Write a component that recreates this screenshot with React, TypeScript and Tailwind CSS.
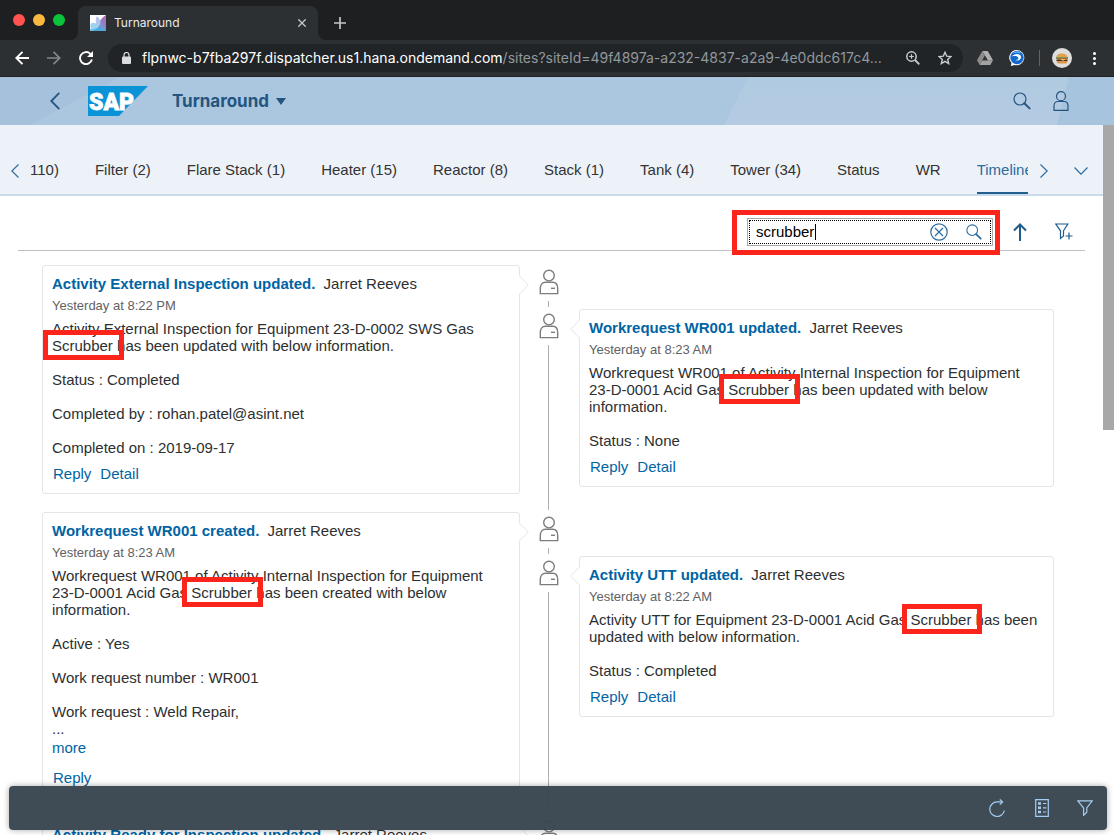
import { useState, type ReactNode } from 'react';

type Entry = {
  title: string;
  author: string;
  time: string;
  body: ReactNode;
  lines: string[];
  more?: boolean;
  actions: string[];
};

const tabs = ['110)', 'Filter (2)', 'Flare Stack (1)', 'Heater (15)', 'Reactor (8)', 'Stack (1)', 'Tank (4)', 'Tower (34)', 'Status', 'WR', 'Timeline'];

function Mark({ children }: { children: string }) {
  return (
    <span className="relative">
      {children}
      <span className="pointer-events-none absolute -top-[7px] -right-[11px] -bottom-[6px] -left-[9px] border-[5px] border-[#fc251c]" />
    </span>
  );
}

const rows: { left: Entry; right?: Entry }[] = [
  {
    left: {
      title: 'Activity External Inspection updated.',
      author: 'Jarret Reeves',
      time: 'Yesterday at 8:22 PM',
      body: <>Activity External Inspection for Equipment 23-D-0002 SWS Gas <Mark>Scrubber</Mark> has been updated with below information.</>,
      lines: ['Status : Completed', 'Completed by : rohan.patel@asint.net', 'Completed on : 2019-09-17'],
      actions: ['Reply', 'Detail'],
    },
    right: {
      title: 'Workrequest WR001 updated.',
      author: 'Jarret Reeves',
      time: 'Yesterday at 8:23 AM',
      body: <>Workrequest WR001 of Activity Internal Inspection for Equipment 23-D-0001 Acid Gas <Mark>Scrubber</Mark> has been updated with below information.</>,
      lines: ['Status : None'],
      actions: ['Reply', 'Detail'],
    },
  },
  {
    left: {
      title: 'Workrequest WR001 created.',
      author: 'Jarret Reeves',
      time: 'Yesterday at 8:23 AM',
      body: <>Workrequest WR001 of Activity Internal Inspection for Equipment 23-D-0001 Acid Gas <Mark>Scrubber</Mark> has been created with below information.</>,
      lines: ['Active : Yes', 'Work request number : WR001', 'Work request : Weld Repair,'],
      more: true,
      actions: ['Reply'],
    },
    right: {
      title: 'Activity UTT updated.',
      author: 'Jarret Reeves',
      time: 'Yesterday at 8:22 AM',
      body: <>Activity UTT for Equipment 23-D-0001 Acid Gas <Mark>Scrubber</Mark> has been updated with below information.</>,
      lines: ['Status : Completed'],
      actions: ['Reply', 'Detail'],
    },
  },
  {
    left: {
      title: 'Activity Ready for Inspection updated.',
      author: 'Jarret Reeves',
      time: 'Yesterday at 8:22 AM',
      body: 'Activity Ready for Inspection has been updated with below information.',
      lines: ['Status : Completed'],
      actions: ['Reply', 'Detail'],
    },
  },
];

function Magnifier({ className }: { className: string }) {
  return (
    <svg viewBox="0 0 18 18" className={className} fill="none" stroke="currentColor">
      <circle cx="7" cy="7" r="6" strokeWidth="1.2" />
      <path d="M11.3 11.3 16.6 16.4" strokeWidth="2" strokeLinecap="round" />
    </svg>
  );
}

function PersonIcon() {
  return (
    <svg viewBox="0 0 20 26" className="h-[26px] w-5 shrink-0 text-[#7d7d7d]" fill="none" stroke="currentColor" strokeWidth="1.4">
      <circle cx="10" cy="6.6" r="5.3" />
      <path d="M1.3 24.6v-5c0-4.2 2.2-6.3 5-6.3h7.4c2.8 0 5 2.1 5 6.3v5z" />
      <path d="M12 19.3h4" />
    </svg>
  );
}

function Card({ entry, side }: { entry: Entry; side: 'left' | 'right' }) {
  return (
    <article className="relative self-start rounded-[3px] border border-[#e5e5e5] bg-white px-[9px] pt-2 pb-[9px]">
      <svg
        viewBox="0 0 10 20"
        className={side === 'left' ? 'absolute top-[9px] -right-[10px] h-5 w-2.5' : 'absolute top-[9px] -left-[10px] h-5 w-2.5 -scale-x-100'}
        fill="#fff"
        stroke="#e5e5e5"
      >
        <path d="M0 0.5 9.3 10 0 19.5" />
      </svg>
      <h3 className="text-[15px] leading-5">
        <a href="#" className="mr-1 font-bold text-[#0064a4]">{entry.title}</a> {entry.author}
      </h3>
      <p className="mt-1 text-[13px] leading-4 text-[#5f6163]">{entry.time}</p>
      <div className="mt-1.5 text-[15px] leading-[17px]">
        <p className="pr-1">{entry.body}</p>
        {entry.lines.map(line => <p key={line} className="mt-[17px]">{line}</p>)}
        {entry.more && (
          <>
            <p>...</p>
            <a href="#" className="mt-0.5 mb-3 block text-[#0064a4]">more</a>
          </>
        )}
      </div>
      <div className="mt-2 flex gap-[9px] pl-px text-[15px] leading-5 text-[#0064a4]">
        {entry.actions.map(action => <button key={action}>{action}</button>)}
      </div>
    </article>
  );
}

function BrowserBar() {
  return (
    <div className="shrink-0 bg-[#1e1f21] font-[Inter,sans-serif]">
      <div className="flex h-10 items-end pl-[13px]">
        <div className="flex h-full items-center gap-2 pr-[13px]">
          <span className="size-3 rounded-full bg-[#ff5350]" />
          <span className="size-3 rounded-full bg-[#fdb83f]" />
          <span className="size-3 rounded-full bg-[#0ac43c]" />
        </div>
        <div className="relative flex h-[34px] w-60 items-center rounded-t-lg bg-[#2d3033] px-3 text-xs text-[#e8eaed]">
          <svg viewBox="0 0 8 8" className="absolute bottom-0 -left-2 size-2" fill="#2d3033"><path d="M8 0v8H0a8 8 0 0 0 8-8z" /></svg>
          <svg viewBox="0 0 8 8" className="absolute -right-2 bottom-0 size-2" fill="#2d3033"><path d="M0 0v8h8a8 8 0 0 1-8-8z" /></svg>
          <svg viewBox="0 0 16 16" className="mr-2 size-4">
            <defs>
              <linearGradient id="fav" x1="0" y1="0.8" x2="1" y2="0.2">
                <stop offset="0" stopColor="#3fa4dc" />
                <stop offset="0.55" stopColor="#7f92d0" />
                <stop offset="1" stopColor="#b665ae" />
              </linearGradient>
            </defs>
            <path d="M0 0h16v16H0z" fill="#fff" />
            <path d="M2 16c3-1 4-2 5-4 1-4 4-9 9-12v16z" fill="url(#fav)" />
            <path d="M6.500 1.500c3 1 4.500 4 3.500 8.500L7 12C5.500 8 5.300 4.500 6.500 1.500z" fill="#b5c4ea" />
            <path d="M.8 8.500c3-1.500 6-.5 8.200 3.500-2 3-6 3-8 2-.8-1.800-.8-3.700-.2-5.500z" fill="#9bd3f2" />
            <path d="M0 14c4 .5 6.500-.5 9-2l7 2v2H0z" fill="#4aa9de" opacity=".75" />
          </svg>
          <span className="flex-1">Turnaround</span>
          <button aria-label="Close tab">
            <svg viewBox="0 0 8 8" className="size-2 text-[#c3c6c9]" stroke="currentColor" strokeWidth="1.3"><path d="M.3.3l7.400 7.400M7.700.3.3 7.700" /></svg>
          </button>
        </div>
        <button aria-label="New tab" className="mb-[11px] ml-4">
          <svg viewBox="0 0 12 12" className="size-3 text-[#c3c6c9]" stroke="currentColor" strokeWidth="1.700"><path d="M6 0v12M0 6h12" /></svg>
        </button>
      </div>
      <div className="flex h-[37px] items-center border-b border-[#211f1f] bg-[#2d3033] pr-[18px] pl-[15px] text-white">
        <button aria-label="Back">
          <svg viewBox="0 0 14 14" className="size-3.5" fill="none" stroke="currentColor" strokeWidth="1.900"><path d="M14 7H1.500M7.500.8 1.300 7l6.200 6.200" /></svg>
        </button>
        <button aria-label="Forward" className="ml-[18px] text-[#85888b]">
          <svg viewBox="0 0 14 14" className="size-3.5" fill="none" stroke="currentColor" strokeWidth="1.700"><path d="M0 7h12.500M6.500.8 12.700 7l-6.200 6.200" /></svg>
        </button>
        <button aria-label="Reload" className="ml-[18px]">
          <svg viewBox="0 0 14 14" className="size-3.5" fill="none" stroke="currentColor" strokeWidth="1.900">
            <path d="M12.900 8.500A6 6 0 1 1 11.300 2.800L13 4.500" />
            <path d="M14 0v6H8z" fill="currentColor" stroke="none" />
          </svg>
        </button>
        <div className="ml-[15px] flex h-7 min-w-0 flex-1 items-center rounded-full bg-[#202427] pr-[11px] pl-[14px]">
          <svg viewBox="0 0 9 12" className="mr-[11px] h-3 w-[9px] shrink-0 text-[#dadce0]">
            <rect y="4.500" width="9" height="7.500" rx="1" fill="currentColor" />
            <path d="M2 5V3a2.500 2.500 0 0 1 5 0v2" fill="none" stroke="currentColor" strokeWidth="1.200" />
          </svg>
          <span className="min-w-0 flex-1 truncate text-sm">
            flpnwc-b7fba297f.dispatcher.us1.hana.ondemand.com<span className="text-[#93979b]">/sites?siteId=49f4897a-a232-4837-a2a9-4e0ddc617c4...</span>
          </span>
          <button aria-label="Zoom" className="ml-4 text-[#c9ccd0]">
            <svg viewBox="0 0 14 14" className="size-3.5" fill="none" stroke="currentColor">
              <circle cx="5.500" cy="5.500" r="4.700" strokeWidth="1.500" />
              <path d="M9 9l4.300 4.300" strokeWidth="1.800" />
              <path d="M5.500 3.200v4.600M3.200 5.500h4.600" strokeWidth="1.200" />
            </svg>
          </button>
          <button aria-label="Bookmark" className="ml-[18px] text-[#c9ccd0]">
            <svg viewBox="0 0 14 14" className="size-3.5" fill="none" stroke="currentColor" strokeWidth="1.400"><path d="M7 1.300l1.700 3.900 4.200.4-3.200 2.800 1 4.200L7 10.400l-3.700 2.200 1-4.200L1.100 5.600l4.200-.4z" /></svg>
          </button>
        </div>
        <svg viewBox="0 0 16 14" className="ml-[14px] h-3.5 w-4 shrink-0">
          <path d="M5.300 0h5.400L16 9.300h-5.300z" fill="#b0b0b0" />
          <path d="M5.300 0 0 9.300 2.700 14 8 4.700z" fill="#8b8b8b" />
          <path d="M2.700 14h10.600L16 9.300H5.400z" fill="#a2a2a2" />
          <path d="M8 4.700 5.400 9.300h5.300z" fill="#333" />
        </svg>
        <svg viewBox="0 0 16 16" className="ml-4 size-4 shrink-0">
          <path d="M8 0a7.600 7.600 0 1 1-2.400 14.900L1.800 16l.7-3A7.600 7.600 0 0 1 8 0z" fill="#fff" />
          <circle cx="8" cy="7.500" r="6.700" fill="#1268cc" />
          <path d="M2.500 6.500c3-3.500 9-3.500 9.500.3.200 3-3 4.500-6 3.200 2 0 3.700-.8 3.300-2.300C8.800 6 5.500 5.700 2.500 6.500z" fill="#fff" />
          <path d="M3.400 3.800c2.500-3 7-2.600 8.500-.6-3-1-5.500-1-8.500.6z" fill="#7ed0fa" />
        </svg>
        <span className="ml-3.5 h-4 w-px bg-[#606367]" />
        <svg viewBox="0 0 20 20" className="ml-3 size-5 shrink-0">
          <circle cx="10" cy="10" r="10" fill="#dedede" />
          <path d="M4.500 9c0-4.800 11-4.300 11 .3z" fill="#dfa04f" />
          <path d="M4 9.200h12v1.600H4z" fill="#5f8d34" />
          <path d="M4.500 10.500h11.200l-1 1.100H6z" fill="#d33b28" />
          <path d="M4.500 11.500h11v1.600h-11z" fill="#5b3021" />
          <path d="M4.700 13h10.800c0 2-1 2.500-2.500 2.500H7c-1.500 0-2.300-.7-2.300-2.500z" fill="#d9964a" />
          <path d="M8 11h6l-3 1.800z" fill="#f5c93a" />
        </svg>
        <button aria-label="Browser menu" className="ml-[21px] flex flex-col gap-0.5">
          <span className="size-[3px] rounded-full bg-white" />
          <span className="size-[3px] rounded-full bg-white" />
          <span className="size-[3px] rounded-full bg-white" />
        </button>
      </div>
    </div>
  );
}

function ShellHeader() {
  return (
    <header className="relative h-12 shrink-0 bg-[#abc7df] text-[#245580]">
      <svg viewBox="0 0 1114 48" preserveAspectRatio="none" className="absolute inset-0 size-full">
        <defs>
          <linearGradient id="sky" x1="0" y1="0" x2="0" y2="1">
            <stop offset="0" stopColor="#afcbe0" />
            <stop offset="1" stopColor="#b5cae3" />
          </linearGradient>
        </defs>
        <path d="M0 0h120L30 48H0z" fill="#a5c1dc" />
        <path d="M748 0h321l-12 48H724z" fill="url(#sky)" />
        <path d="M1069 0h45v48h-57z" fill="#a7c4df" />
      </svg>
      <div className="relative flex h-full items-center pr-[45px] pl-[50px]">
        <button aria-label="Back">
          <svg viewBox="0 0 10 18" className="h-[18px] w-2.5" fill="none" stroke="currentColor" strokeWidth="1.800"><path d="M9.300.8 1.300 9l8 8.200" /></svg>
        </button>
        <svg viewBox="0 0 60 30" className="ml-7 h-[30px] w-[60px]" role="img" aria-label="SAP">
          <path d="M0 0h60L31 30H0z" fill="#0a93d6" />
          <text x="1" y="24" fontFamily="Roboto" fontWeight="900" fontSize="23" fill="#fff" stroke="#fff" strokeWidth="0.800">SAP</text>
        </svg>
        <button className="ml-6 flex items-center gap-[7px] font-[Inter,sans-serif] text-[17px] leading-6 font-bold">
          Turnaround
          <svg viewBox="0 0 10 7" className="h-[7px] w-[10px]" fill="currentColor"><path d="M0 0h10L5 7z" /></svg>
        </button>
        <button aria-label="Search" className="ml-auto"><Magnifier className="size-[18px]" /></button>
        <button aria-label="User" className="ml-[22px]">
          <svg viewBox="0 0 16 20" className="h-5 w-4" fill="none" stroke="currentColor" strokeWidth="1.200">
            <circle cx="8" cy="5.200" r="4.500" />
            <path d="M1 19.300v-4.300c0-3 1.800-4.500 4-4.500h6c2.200 0 4 1.500 4 4.500v4.300z" />
          </svg>
        </button>
      </div>
    </header>
  );
}

function TabStrip() {
  return (
    <nav className="flex h-[71px] shrink-0 border-b-2 border-[#c9daeb] bg-[#edf2f9] pl-[11px] text-[15px]">
      <button aria-label="Previous tabs" className="mt-[23px] text-[#2c6c9e]">
        <svg viewBox="0 0 8 14" className="h-3.5 w-2" fill="none" stroke="currentColor" strokeWidth="1.200"><path d="M7.500.5.8 7l6.700 6.500" /></svg>
      </button>
      <div className="ml-[11px] flex min-w-0 flex-1 justify-between gap-9 overflow-hidden">
        {tabs.map(tab => (
          <a
            key={tab}
            href="#"
            className={tab === 'Timeline'
              ? 'min-w-0 flex-1 overflow-hidden border-b-2 border-[#1f608e] pt-[35px] leading-5 whitespace-nowrap text-[#2c6c9e]'
              : 'shrink-0 pt-[35px] leading-5 whitespace-nowrap text-[#333]'}
          >
            {tab}
          </a>
        ))}
      </div>
      <button aria-label="Next tabs" className="mt-[23px] ml-3 text-[#2c6c9e]">
        <svg viewBox="0 0 8 14" className="h-3.5 w-2" fill="none" stroke="currentColor" strokeWidth="1.200"><path d="M.5.500 7.200 7 .5 13.500" /></svg>
      </button>
      <button aria-label="All tabs" className="mt-[22px] mr-[15px] ml-[26px] text-[#2c6c9e]">
        <svg viewBox="0 0 14 8" className="h-2 w-3.5" fill="none" stroke="currentColor" strokeWidth="1.200"><path d="M.5.500 7 7.200 13.500.5" /></svg>
      </button>
    </nav>
  );
}

function SearchBar() {
  const [query, setQuery] = useState('scrubber');
  return (
    <div className="mx-[18px] flex items-center justify-end border-b border-[#bfbfbf] pt-[22px] pb-1 text-[#1f5c8b]">
      <div className="relative flex h-7 w-[246px] items-center border border-[#a9a9a9] p-px text-[#2c6c9e]">
        <div className="flex h-full w-full items-center border border-dotted border-black pr-2 pl-[6px]">
          <input
            aria-label="Search timeline"
            value={query}
            onChange={e => setQuery(e.target.value)}
            className="min-w-0 flex-1 bg-transparent text-[15px] text-black outline-none"
          />
          <button aria-label="Clear" onClick={() => setQuery('')}>
            <svg viewBox="0 0 18 18" className="size-[18px]" fill="none" stroke="currentColor" strokeWidth="1.200">
              <circle cx="9" cy="9" r="8.200" />
              <path d="M5 5l8 8M13 5l-8 8" />
            </svg>
          </button>
          <button aria-label="Search" className="ml-[18px]"><Magnifier className="size-4" /></button>
        </div>
        <span className="absolute top-[5px] left-[67px] h-4 w-px bg-black" />
        <span className="pointer-events-none absolute -top-[9px] -right-[8px] -bottom-[10px] -left-4 border-[5px] border-[#fc251c]" />
      </div>
      <button aria-label="Sort" className="ml-5">
        <svg viewBox="0 0 14 18" className="h-[18px] w-3.5" fill="none" stroke="currentColor" strokeWidth="2"><path d="M7 18V1.500M1 7.500l6-6 6 6" /></svg>
      </button>
      <button aria-label="Add filter" className="mr-3 ml-7">
        <svg viewBox="0 0 18 18" className="size-[18px]" fill="none" stroke="currentColor" strokeWidth="1.200">
          <path d="M.8 1h12L8.500 7.800V13L5.500 15.500V7.800z" />
          <path d="M14 9.500v7M10.500 13H17.500" />
        </svg>
      </button>
    </div>
  );
}

function Timeline() {
  return (
    <div className="pt-[14px] pr-[49px] pl-[42px] text-[#2d2f31]">
      {rows.map((row, i) => (
        <section key={i} className="grid grid-cols-[478fr_59px_475fr]">
          <div className="mb-[18px] grid"><Card entry={row.left} side="left" /></div>
          <div className="flex flex-col items-center pt-1 pr-0.5">
            <PersonIcon />
            <span className="my-1.5 h-1.5 w-px bg-[#b0b0b0]" />
            <PersonIcon />
            <span className="mt-1.5 mb-0.5 w-px flex-1 bg-[#b0b0b0]" />
          </div>
          {row.right && <div className="mt-11 grid"><Card entry={row.right} side="right" /></div>}
        </section>
      ))}
    </div>
  );
}

function FooterBar() {
  return (
    <footer className="absolute inset-x-0 bottom-[5px] mr-[7px] ml-[9px] flex h-11 items-center justify-end rounded-[4px] bg-[#3a4650]/97 pr-[14px] text-[#a5cdf2] shadow-[0_0_6px_rgba(0,0,0,0.35)]">
      <button aria-label="Refresh">
        <svg viewBox="0 0 16 18" className="h-[18px] w-4" fill="none" stroke="currentColor" strokeWidth="1.200">
          <path d="M15.300 11.500A7.300 7.300 0 1 1 8 2.900h5.200" />
          <path d="M10.800.500l2.800 2.400-2.800 2.600" />
        </svg>
      </button>
      <button aria-label="Legend" className="ml-[30px]">
        <svg viewBox="0 0 14 18" className="h-[18px] w-3.5" fill="none" stroke="currentColor" strokeWidth="1.200">
          <path d="M.7.700h12.600v16.600H.700z" />
          <path d="M3 4.500h3M3 8.800h3M3 13h3" strokeWidth="2.600" />
          <path d="M8 4.500h3.300M8 8.800h3.300M8 13h3.300" />
        </svg>
      </button>
      <button aria-label="Filter" className="ml-7">
        <svg viewBox="0 0 16 16" className="size-4" fill="none" stroke="currentColor" strokeWidth="1.200"><path d="M.8.800h14.400L9.800 8v4.300l-3.200 3V8z" /></svg>
      </button>
    </footer>
  );
}

export default function App() {
  return (
    <div className="relative flex h-screen flex-col overflow-hidden bg-white font-['Liberation_Sans',Arial,sans-serif]">
      <BrowserBar />
      <ShellHeader />
      <div className="flex min-h-0 flex-1">
        <main className="min-w-0 flex-1 overflow-hidden">
          <TabStrip />
          <SearchBar />
          <Timeline />
        </main>
        <div className="w-[11px] shrink-0">
          <div className="h-[43%] bg-[#a8a8a8]" />
        </div>
      </div>
      <FooterBar />
    </div>
  );
}
